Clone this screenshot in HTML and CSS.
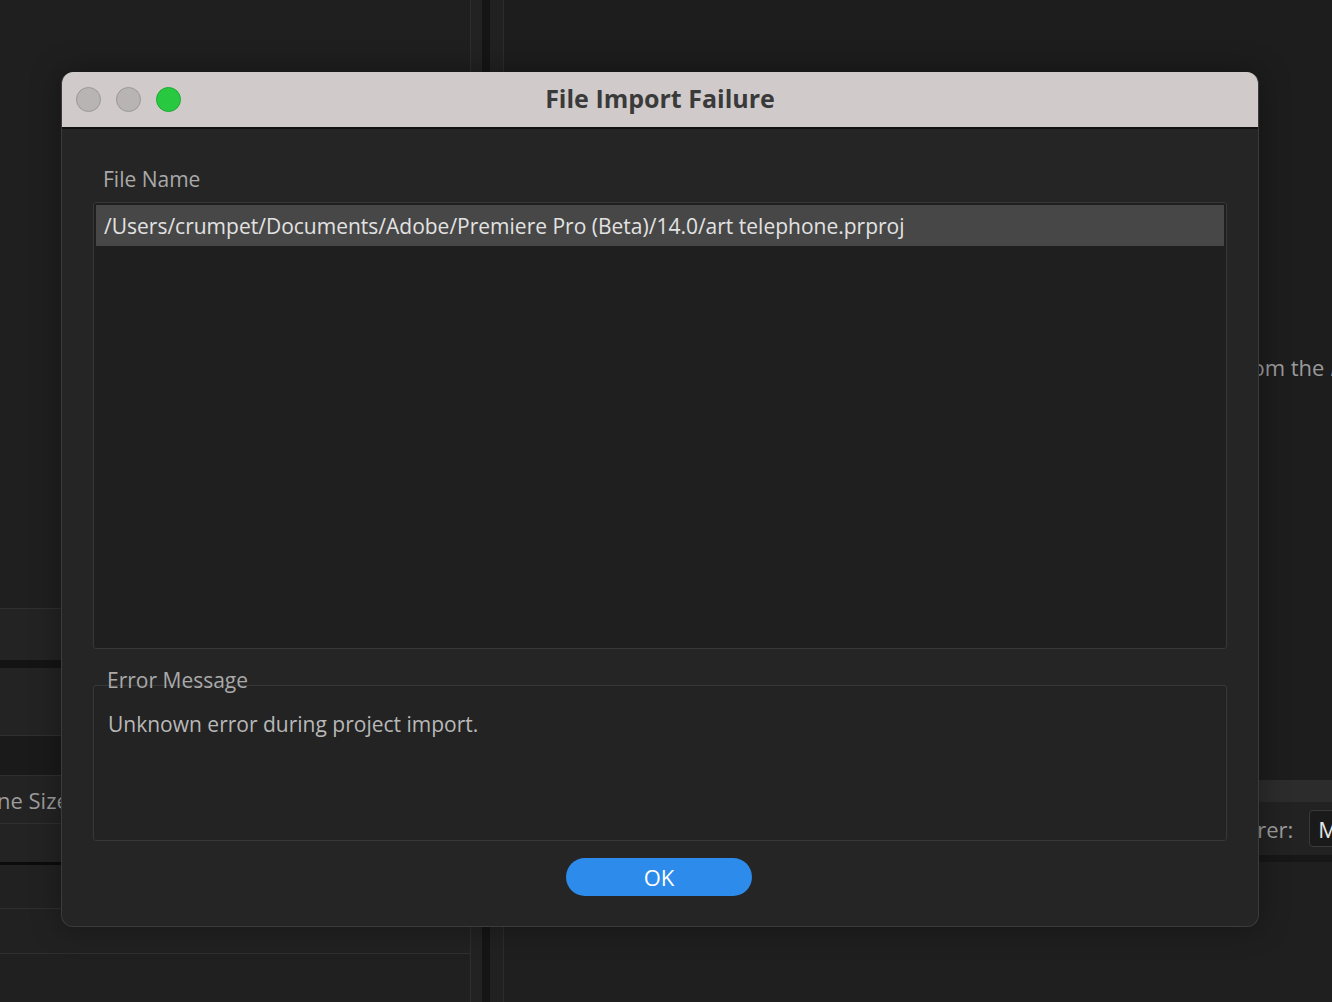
FILE: index.html
```html
<!DOCTYPE html>
<html lang="en">
<head>
<meta charset="utf-8">
<title>File Import Failure</title>
<link rel="stylesheet" href="styles.css">
</head>
<body>
<div class="app">
  <div class="left-panel">
    <div class="left-top"></div>
    <div class="lrow lrow-a"></div>
    <div class="lband"></div>
    <div class="lrow lrow-b"></div>
    <div class="lrow lrow-c"></div>
    <div class="lrow lrow-d"><span class="ltext">ne Size</span></div>
    <div class="lrow lrow-e"></div>
    <div class="lband2"></div>
    <div class="lrow lrow-f"></div>
    <div class="lrow lrow-g"></div>
    <div class="lrow lrow-h"></div>
  </div>
  <div class="divider">
    <div class="div-a"></div>
    <div class="div-b"></div>
    <div class="div-c"></div>
  </div>
  <div class="right-panel">
    <div class="r-top">
      <p class="hint">from the <em>Media Browser</em></p>
    </div>
    <div class="r-band"></div>
    <div class="r-row">
      <span class="rlabel">Renderer:</span>
      <span class="rselect">Mercury Playback Engine</span>
    </div>
    <div class="r-band2"></div>
    <div class="r-bottom"></div>
  </div>
</div>

<div class="dialog">
  <div class="titlebar">
    <div class="lights">
      <span class="light gray"></span>
      <span class="light gray"></span>
      <span class="light green"></span>
    </div>
    <div class="title">File Import Failure</div>
  </div>
  <div class="body">
    <div class="label">File Name</div>
    <div class="list">
      <div class="row selected">/Users/crumpet/Documents/Adobe/Premiere Pro (Beta)/14.0/art telephone.prproj</div>
    </div>
    <div class="group-label">Error Message</div>
    <div class="group">
      <div class="msg">Unknown error during project import.</div>
    </div>
    <div class="actions">
      <button class="ok">OK</button>
    </div>
  </div>
</div>
</body>
</html>
```

FILE: styles.css
```css
* { box-sizing: border-box; }
html, body { margin: 0; padding: 0; }
body {
  width: 1332px;
  height: 1002px;
  overflow: hidden;
  background: #1e1e1e;
  font-family: "Open Sans", "Liberation Sans", sans-serif;
  position: relative;
}

/* ---------- background app ---------- */
.app {
  display: flex;
  height: 1002px;
  width: 1332px;
  overflow: hidden;
}
.left-panel {
  width: 470px;
  flex: none;
  display: flex;
  flex-direction: column;
  background: #1f1f1f;
  overflow: hidden;
}
.left-top { height: 608px; flex: none; background: #1f1f1f; }
.lrow { flex: none; border-top: 1px solid #2f2f2f; background: #232323; }
.lrow-a { height: 52px; }
.lband { flex: none; height: 8px; background: #141414; }
.lrow-b { height: 67px; border-top: none; }
.lrow-c { height: 40px; background: #1a1a1a; }
.lrow-d { height: 48px; display: flex; align-items: center; }
.ltext { color: #9c9c9c; font-size: 22px; margin-left: -3px; white-space: nowrap; }
.lrow-e { height: 39px; }
.lband2 { flex: none; height: 3px; background: #0c0c0c; }
.lrow-f { height: 43px; border-top: none; background: #212121; }
.lrow-g { height: 45px; background: #212121; }
.lrow-h { flex: 1; background: #202020; }

.divider { width: 34px; flex: none; display: flex; }
.div-a { width: 12px; border-left: 1px solid #2e2e2e; background: #222; }
.div-b { width: 8px; background: #151515; }
.div-c { width: 14px; border-right: 1px solid #2c2c2c; background: #212121; }

.right-panel {
  flex: 1;
  min-width: 0;
  overflow: hidden;
  display: flex;
  flex-direction: column;
  background: #1d1d1d;
}
.r-top { height: 780px; flex: none; display: flex; align-items: flex-start; }
.hint {
  margin: 352px 0 0 731px;
  color: #9a9a9a;
  font-size: 22px;
  white-space: nowrap;
}
.hint em { font-style: italic; }
.r-band { flex: none; height: 22px; background: #2c2c2c; }
.r-row {
  flex: none;
  height: 53px;
  background: #222;
  display: flex;
  align-items: center;
  gap: 16px;
  padding-left: 688px;
  white-space: nowrap;
}
.rlabel { color: #9c9c9c; font-size: 22px; flex: none; }
.rselect {
  flex: none;
  height: 37px;
  padding: 0 8px;
  display: flex;
  align-items: center;
  background: #1a1a1a;
  border: 1px solid #3a3a3a;
  border-radius: 4px;
  color: #e6e6e6;
  font-size: 22px;
}
.r-band2 { flex: none; height: 7px; background: #171717; }
.r-bottom { flex: 1; background: #1f1f1f; }

/* ---------- dialog ---------- */
.dialog {
  position: absolute;
  left: 61px;
  top: 72px;
  width: 1198px;
  height: 855px;
  border-radius: 12px;
  overflow: hidden;
  background: #252525;
  border: 1px solid #3b3b3b;
  border-top: none;
  box-shadow: 0 0 30px rgba(0,0,0,0.35);
  display: flex;
  flex-direction: column;
}
.titlebar {
  height: 57px;
  flex: none;
  background: #d0cbca;
  border-bottom: 2px solid #111;
  display: flex;
  align-items: center;
  position: relative;
}
.lights {
  display: flex;
  gap: 15px;
  padding-left: 14px;
}
.light {
  width: 25px;
  height: 25px;
  border-radius: 50%;
}
.light.gray { background: #b9b4b4; border: 1px solid #9b9797; }
.light.green { background: #28c940; border: 1px solid #1fa832; }
.title {
  position: absolute;
  left: 0;
  right: 0;
  top: 0;
  bottom: 0;
  display: flex;
  align-items: center;
  justify-content: center;
  font-family: "Open Sans", "Liberation Sans", sans-serif;
  font-weight: 700;
  font-size: 25px;
  color: #3a3a3a;
  padding-bottom: 3px;
}

.body {
  flex: 1;
  display: flex;
  flex-direction: column;
  padding: 36px 31px 30px;
}
.label {
  color: #a9a9a9;
  font-size: 21px;
  line-height: 28px;
  padding-left: 10px;
  margin-bottom: 9px;
}
.list {
  height: 447px;
  flex: none;
  border: 1px solid #383838;
  border-radius: 3px;
  background: #1f1f1f;
  padding: 2px;
}
.row {
  height: 41px;
  display: flex;
  align-items: center;
  padding-left: 8px;
  font-size: 21px;
  color: #e2e2e2;
  white-space: nowrap;
}
.row.selected { background: #474747; }

.group-label {
  position: relative;
  z-index: 1;
  margin-top: 17px;
  padding-left: 14px;
  color: #a9a9a9;
  font-size: 21px;
  line-height: 28px;
  margin-bottom: -9px;
}
.group {
  height: 156px;
  flex: none;
  border: 1px solid #383838;
  border-radius: 3px;
  background: #232323;
  padding: 24px 0 0 14px;
}
.msg {
  color: #b8b8b8;
  font-size: 21px;
  line-height: 28px;
}
.actions {
  display: flex;
  justify-content: center;
  margin-top: 17px;
}
.ok {
  width: 186px;
  height: 38px;
  border: none;
  border-radius: 19px;
  background: #2d8ceb;
  color: #fff;
  font-family: "Open Sans", "Liberation Sans", sans-serif;
  font-size: 22px;
  padding: 0;
  margin-left: -2px;
}
```
